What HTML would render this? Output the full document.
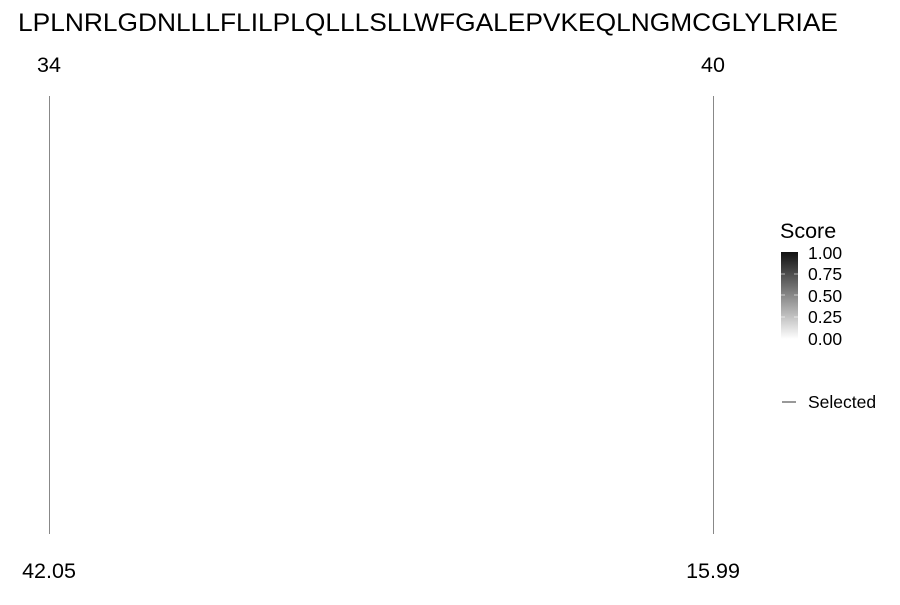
<!DOCTYPE html>
<html><head><style>
body{margin:0;background:#fff;width:900px;height:600px;overflow:hidden}
</style></head><body>
<svg width="900" height="600" xmlns="http://www.w3.org/2000/svg" font-family="Liberation Sans, Arial, sans-serif">
<defs><linearGradient id="g" x1="0" y1="1" x2="0" y2="0">
<stop offset="0" stop-color="#fff"/><stop offset="1" stop-color="#111"/></linearGradient></defs>
<text x="18" y="31" font-size="25" textLength="820" lengthAdjust="spacingAndGlyphs">LPLNRLGDNLLLFLILPLQLLLSLLWFGALEPVKEQLNGMCGLYLRIAE</text>
<text x="49" y="72" font-size="21.5" text-anchor="middle">34</text>
<text x="713" y="72" font-size="21.5" text-anchor="middle">40</text>
<line x1="49.5" y1="96" x2="49.5" y2="534" stroke="#888" stroke-width="1"/>
<line x1="713.5" y1="96" x2="713.5" y2="534" stroke="#888" stroke-width="1"/>
<text x="49" y="578" font-size="21.5" text-anchor="middle">42.05</text>
<text x="713" y="578" font-size="21.5" text-anchor="middle">15.99</text>
<text x="780" y="238" font-size="21.5">Score</text>
<rect x="781" y="252" width="17" height="87" fill="url(#g)"/>
<g stroke="#fff" stroke-opacity="0.6"><line x1="781" y1="274" x2="785" y2="274"/><line x1="794" y1="274" x2="798" y2="274"/><line x1="781" y1="295" x2="785" y2="295"/><line x1="794" y1="295" x2="798" y2="295"/><line x1="781" y1="317" x2="785" y2="317"/><line x1="794" y1="317" x2="798" y2="317"/></g>
<g font-size="17.5"><text x="808" y="259">1.00</text><text x="808" y="280">0.75</text><text x="808" y="302">0.50</text><text x="808" y="323">0.25</text><text x="808" y="345">0.00</text></g>
<line x1="782" y1="402" x2="796" y2="402" stroke="#333" stroke-width="1"/>
<text x="808" y="408" font-size="17.5">Selected</text>
</svg>
</body></html>
